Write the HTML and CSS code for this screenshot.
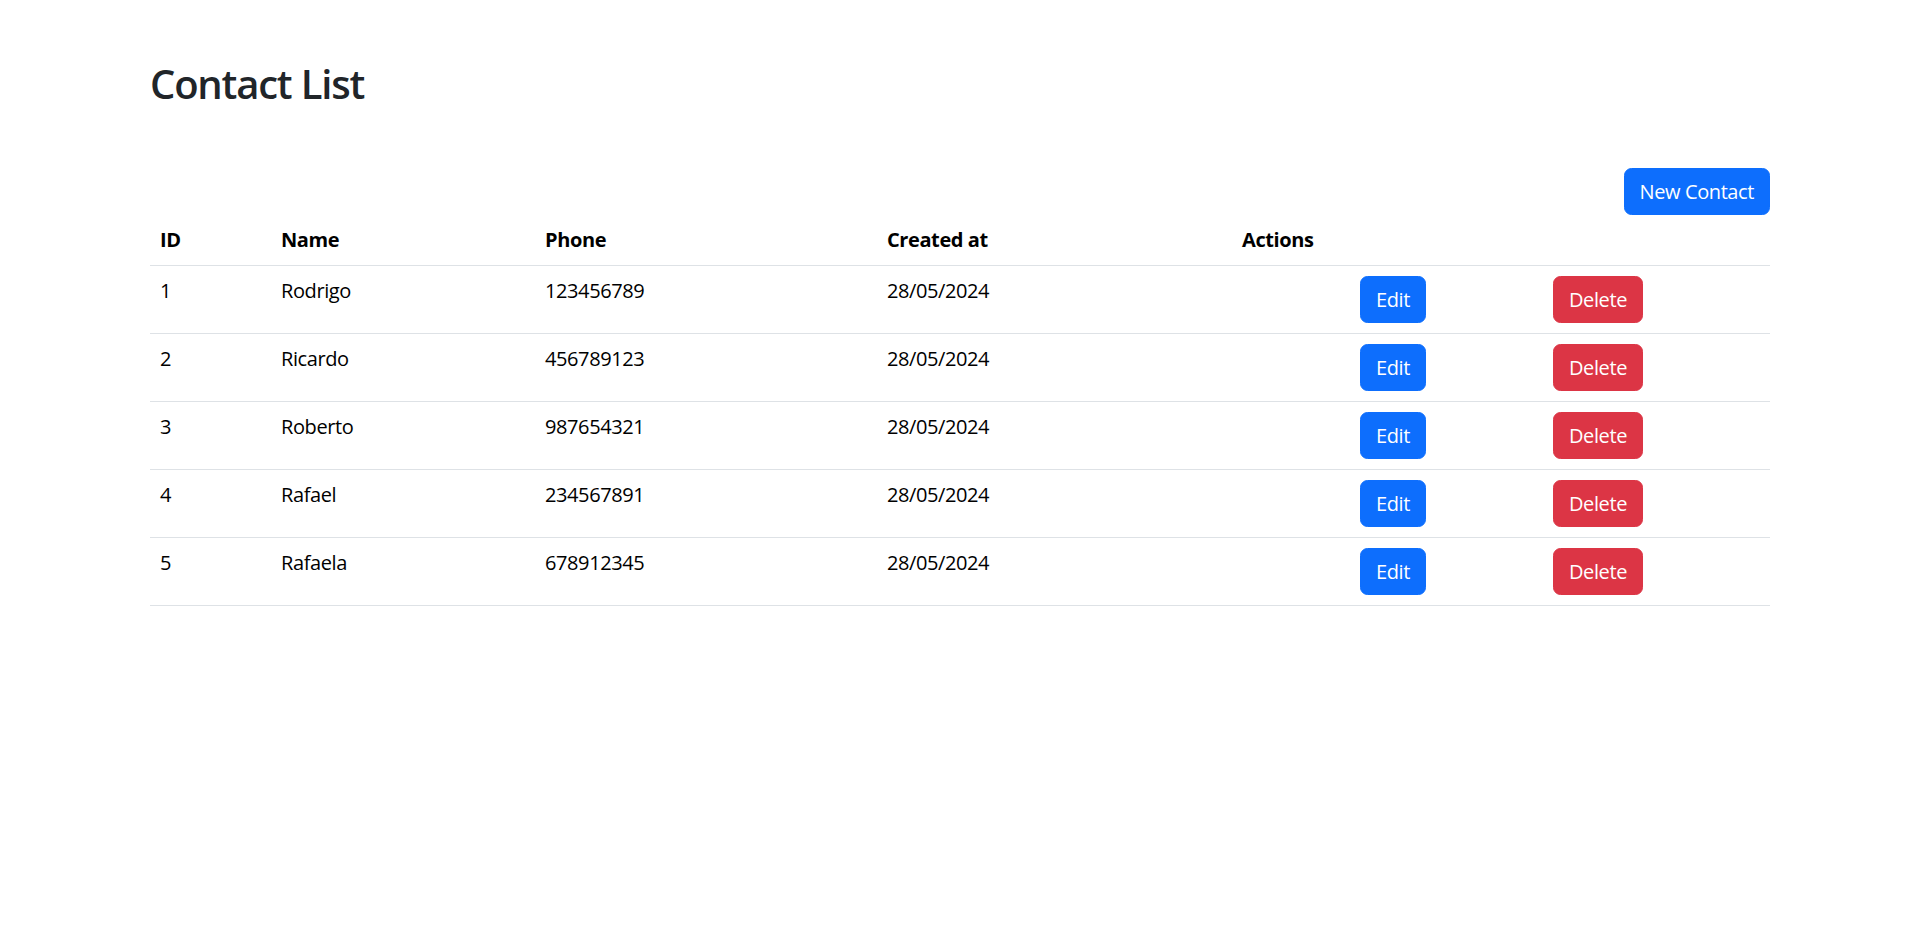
FILE: index.html
```html
<!DOCTYPE html>
<html lang="en">
<head>
<meta charset="utf-8">
<title>Contact List</title>
<link rel="stylesheet" href="styles.css">
</head>
<body>
<div class="container">
  <h2 class="page-title">Contact List</h2>
  <div class="toolbar">
    <button class="btn btn-primary">New Contact</button>
  </div>
  <table class="table">
    <colgroup>
      <col class="c-id"><col class="c-name"><col class="c-phone"><col class="c-date"><col class="c-act"><col class="c-edit"><col class="c-del">
    </colgroup>
    <thead>
      <tr><th>ID</th><th>Name</th><th>Phone</th><th>Created at</th><th colspan="3">Actions</th></tr>
    </thead>
    <tbody>
      <tr><td>1</td><td>Rodrigo</td><td>123456789</td><td>28/05/2024</td><td></td><td><button class="btn btn-primary">Edit</button></td><td><button class="btn btn-danger">Delete</button></td></tr>
      <tr><td>2</td><td>Ricardo</td><td>456789123</td><td>28/05/2024</td><td></td><td><button class="btn btn-primary">Edit</button></td><td><button class="btn btn-danger">Delete</button></td></tr>
      <tr><td>3</td><td>Roberto</td><td>987654321</td><td>28/05/2024</td><td></td><td><button class="btn btn-primary">Edit</button></td><td><button class="btn btn-danger">Delete</button></td></tr>
      <tr><td>4</td><td>Rafael</td><td>234567891</td><td>28/05/2024</td><td></td><td><button class="btn btn-primary">Edit</button></td><td><button class="btn btn-danger">Delete</button></td></tr>
      <tr><td>5</td><td>Rafaela</td><td>678912345</td><td>28/05/2024</td><td></td><td><button class="btn btn-primary">Edit</button></td><td><button class="btn btn-danger">Delete</button></td></tr>
    </tbody>
  </table>
</div>
</body>
</html>
```

FILE: styles.css
```css
html, body {
  margin: 0;
  padding: 0;
  background: #fff;
}
body {
  font-family: "Open Sans", "Noto Sans", sans-serif;
  font-size: 20px;
  line-height: 30px;
  color: #212529;
}
.container {
  width: 1620px;
  margin: 0 auto;
  padding-top: 60px;
}
.page-title {
  margin: 0 0 60px 0;
  font-size: 40px;
  font-weight: 600;
  line-height: 48px;
  letter-spacing: -1.2px;
}
.toolbar {
  display: flex;
  justify-content: flex-end;
}
.btn {
  font-family: inherit;
  font-size: 20px;
  line-height: 30px;
  padding: 7.5px 15px;
  border: 1.25px solid transparent;
  border-radius: 7.5px;
  color: #fff;
  cursor: pointer;
  letter-spacing: -0.4px;
}
.btn-primary {
  background: #0d6efd;
  border-color: #0d6efd;
}
.btn-danger {
  background: #dc3545;
  border-color: #dc3545;
}
.table {
  width: 1620px;
  table-layout: fixed;
  border-collapse: collapse;
  color: #000;
  letter-spacing: -0.4px;
}
.c-id { width: 121px; }
.c-name { width: 264px; }
.c-phone { width: 342px; }
.c-date { width: 355px; }
.c-act { width: 118px; }
.c-edit { width: 193px; }
.c-del { width: 227px; }
.table th,
.table td {
  padding: 10px;
  text-align: left;
  vertical-align: top;
  border-bottom: 1px solid #dee2e6;
}
.table th {
  font-weight: 700;
  vertical-align: bottom;
}
```
